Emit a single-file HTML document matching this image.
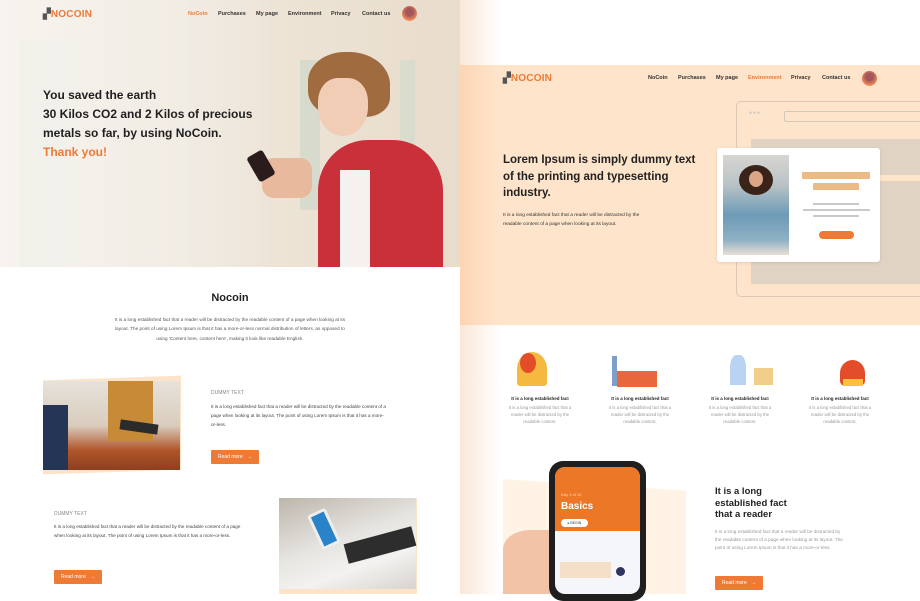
<!DOCTYPE html>
<html><head><meta charset="utf-8"><style>
*{margin:0;padding:0;box-sizing:border-box}
body{width:920px;height:594px;overflow:hidden;position:relative;background:#fff;font-family:"Liberation Sans",sans-serif;color:#222}
.abs{position:absolute}
.nav{font-size:5.5px;font-weight:bold;color:#333}
.logo{font-weight:900;font-size:10px;letter-spacing:.2px}
.btn{background:#ee7a35;color:#fff;font-size:5px;border-radius:1px;display:flex;align-items:center;justify-content:space-between;padding:0 7px}
.small{font-size:4.6px;line-height:9px;color:#444}
</style></head><body>

<!-- LEFT HERO -->
<div class="abs" style="left:0;top:0;width:460px;height:267px;background:linear-gradient(90deg,#f7f3ee 0%,#f1ece4 40%,#ede4d6 60%,#e8dccb 100%)"></div>
<div class="abs" style="left:20px;top:40px;width:50px;height:227px;background:#eef0ea;opacity:.6"></div>
<div class="abs" style="left:300px;top:60px;width:20px;height:150px;background:#c9d6c6;opacity:.6"></div>
<div class="abs" style="left:400px;top:60px;width:15px;height:120px;background:#cfdacb;opacity:.6"></div>
<!-- woman -->
<div class="abs" style="left:308px;top:52px;width:82px;height:65px;border-radius:45% 50% 30% 40%;background:#a06b3e"></div>
<div class="abs" style="left:318px;top:78px;width:50px;height:58px;border-radius:40% 40% 50% 50%;background:#f2cdb5"></div>
<div class="abs" style="left:318px;top:140px;width:125px;height:127px;border-radius:40% 40% 0 0;background:#c9303a"></div>
<div class="abs" style="left:340px;top:170px;width:30px;height:97px;background:#f4f1ee"></div>
<div class="abs" style="left:262px;top:158px;width:50px;height:40px;border-radius:12px;background:#e8b99c"></div>
<div class="abs" style="left:252px;top:152px;width:18px;height:28px;border-radius:3px;background:#2a1c1c;transform:rotate(-30deg)"></div>

<div class="abs logo" style="left:43px;top:9px;color:#ee7a35"><span style="color:#555">▞</span>NOCOIN</div>
<div class="abs nav" style="left:188px;top:11px;color:#ee7a35">NoCoin</div>
<div class="abs nav" style="left:218px;top:11px">Purchases</div>
<div class="abs nav" style="left:256px;top:11px">My page</div>
<div class="abs nav" style="left:288px;top:11px">Environment</div>
<div class="abs nav" style="left:331px;top:11px">Privacy</div>
<div class="abs nav" style="left:362px;top:11px">Contact us</div>
<div class="abs" style="left:402px;top:6px;width:15px;height:15px;border-radius:50%;background:radial-gradient(circle at 50% 40%,#a3565b 30%,#f08a5a 70%)"></div>

<div class="abs" style="left:43px;top:86px;font-size:12px;font-weight:bold;line-height:19px;color:#1f1f1f">You saved the earth<br>30 Kilos CO2 and 2 Kilos of precious<br>metals so far, by using NoCoin.<br><span style="color:#ee7a35">Thank you!</span></div>

<!-- LEFT CONTENT -->
<div class="abs" style="left:0;top:292px;width:460px;text-align:center;font-size:11px;font-weight:bold">Nocoin</div>
<div class="abs" style="left:112px;top:315px;width:236px;text-align:center;font-size:4.7px;line-height:9.3px;color:#555">It is a long established fact that a reader will be distracted by the readable content of a page when looking at its layout. The point of using Lorem Ipsum is that it has a more-or-less normal distribution of letters, as opposed to using 'Content here, content here', making it look like readable English.</div>

<div class="abs" style="left:43px;top:378px;width:138px;height:94px;background:#fde4c8;transform:skewY(-2deg)"></div>
<div class="abs" style="left:43px;top:381px;width:137px;height:89px;background:linear-gradient(180deg,#e6e2dc 0%,#d9cdbd 50%,#b0552a 78%,#8d3f1f 100%)"></div>
<div class="abs" style="left:108px;top:381px;width:45px;height:60px;background:#c78a36"></div>
<div class="abs" style="left:43px;top:405px;width:25px;height:65px;background:#253556"></div>
<div class="abs" style="left:120px;top:422px;width:38px;height:10px;background:#2b2b2b;transform:rotate(8deg)"></div>

<div class="abs" style="left:211px;top:390px;font-size:5px;color:#888">DUMMY TEXT</div>
<div class="abs small" style="left:211px;top:402px;width:175px">It is a long established fact that a reader will be distracted by the readable content of a page when looking at its layout. The point of using Lorem Ipsum is that it has a more-or-less.</div>
<div class="abs btn" style="left:211px;top:450px;width:48px;height:14px"><span>Read more</span><span>→</span></div>

<div class="abs" style="left:54px;top:511px;font-size:5px;color:#888">DUMMY TEXT</div>
<div class="abs small" style="left:54px;top:522px;width:196px">It is a long established fact that a reader will be distracted by the readable content of a page when looking at its layout. The point of using Lorem Ipsum is that it has a more-or-less.</div>
<div class="abs btn" style="left:54px;top:570px;width:48px;height:14px"><span>Read more</span><span>→</span></div>

<div class="abs" style="left:279px;top:498px;width:138px;height:96px;background:#fde4c8"></div>
<div class="abs" style="left:279px;top:498px;width:137px;height:91px;background:linear-gradient(160deg,#bcb5ab 0%,#e6e4e0 45%,#f3f2f0 70%,#d8d4ce 100%)"></div>
<div class="abs" style="left:314px;top:510px;width:20px;height:38px;border-radius:3px;background:#2a83c9;border:3px solid #eee;transform:rotate(-25deg)"></div>
<div class="abs" style="left:345px;top:535px;width:70px;height:20px;background:#2d2d2d;transform:rotate(-15deg)"></div>

<!-- RIGHT PANEL -->
<div class="abs" style="left:460px;top:0;width:460px;height:594px;background:#fff"></div>
<div class="abs" style="left:460px;top:0;width:40px;height:594px;background:linear-gradient(90deg,#fbe7d8,#fff)"></div>
<div class="abs" style="left:460px;top:65px;width:460px;height:260px;background:linear-gradient(90deg,#fdd5b5 0%,#fee4ca 8%,#fee4ca 100%)"></div>

<div class="abs logo" style="left:503px;top:73px;color:#ee7a35"><span style="color:#555">▞</span>NOCOIN</div>
<div class="abs nav" style="left:648px;top:75px">NoCoin</div>
<div class="abs nav" style="left:678px;top:75px">Purchases</div>
<div class="abs nav" style="left:716px;top:75px">My page</div>
<div class="abs nav" style="left:748px;top:75px;color:#ee7a35">Environment</div>
<div class="abs nav" style="left:791px;top:75px">Privacy</div>
<div class="abs nav" style="left:822px;top:75px">Contact us</div>
<div class="abs" style="left:862px;top:71px;width:15px;height:15px;border-radius:50%;background:radial-gradient(circle at 50% 40%,#a3565b 30%,#f08a5a 70%)"></div>

<div class="abs" style="left:503px;top:152px;font-size:11.5px;font-weight:bold;line-height:16.5px;color:#222">Lorem Ipsum is simply dummy text<br>of the printing and typesetting<br>industry.</div>
<div class="abs" style="left:503px;top:211px;font-size:4.8px;line-height:9.3px;color:#333">It is a long established fact that a reader will be distracted by the<br>readable content of a page when looking at its layout.</div>

<div class="abs" style="left:736px;top:101px;width:190px;height:196px;border:1px solid #dcc9b5;border-radius:5px"></div>
<div class="abs" style="left:749px;top:110px;color:#c5c5c5;font-size:5px;letter-spacing:1px">●●●</div>
<div class="abs" style="left:784px;top:111px;width:140px;height:11px;border:1px solid #d6c8b8;border-radius:2px"></div>
<div class="abs" style="left:751px;top:139px;width:170px;height:36px;background:#e0d3c3"></div>
<div class="abs" style="left:751px;top:181px;width:170px;height:103px;background:#e0d3c3"></div>
<div class="abs" style="left:717px;top:148px;width:163px;height:114px;background:#fff;border-radius:3px;box-shadow:0 1px 3px rgba(0,0,0,.1)"></div>
<div class="abs" style="left:723px;top:155px;width:66px;height:100px;background:linear-gradient(180deg,#d8d6d2 0%,#b9c3c6 30%,#6d9bb7 60%,#8fb0c4 85%,#e8e0d4 100%)"></div>
<div class="abs" style="left:739px;top:165px;width:34px;height:30px;border-radius:50%;background:#3a2419"></div>
<div class="abs" style="left:749px;top:171px;width:14px;height:16px;border-radius:50%;background:#d9a785"></div>
<div class="abs" style="left:802px;top:172px;width:68px;height:7px;background:#ebbb86;border-radius:1px"></div>
<div class="abs" style="left:813px;top:183px;width:46px;height:7px;background:#ebbb86;border-radius:1px"></div>
<div class="abs" style="left:813px;top:203px;width:46px;height:2px;background:#c9c9c9"></div>
<div class="abs" style="left:803px;top:209px;width:67px;height:2px;background:#c9c9c9"></div>
<div class="abs" style="left:813px;top:215px;width:46px;height:2px;background:#c9c9c9"></div>
<div class="abs" style="left:819px;top:231px;width:35px;height:8px;background:#ee7a35;border-radius:4px"></div>

<!-- features -->
<div class="abs" style="left:517px;top:352px;width:30px;height:34px;border-radius:50% 50% 10% 10%;background:#f5b93f"></div>
<div class="abs" style="left:520px;top:353px;width:16px;height:20px;border-radius:50%;background:#e44d2a"></div>
<div class="abs" style="left:617px;top:371px;width:40px;height:16px;background:#e8683b"></div>
<div class="abs" style="left:612px;top:356px;width:5px;height:30px;background:#7f9fc8"></div>
<div class="abs" style="left:730px;top:355px;width:16px;height:30px;background:#b9d3f2;border-radius:40% 40% 0 0"></div>
<div class="abs" style="left:754px;top:368px;width:19px;height:17px;background:#f1cf8b"></div>
<div class="abs" style="left:840px;top:360px;width:25px;height:26px;border-radius:50% 50% 20% 20%;background:#e44d2a"></div>
<div class="abs" style="left:843px;top:379px;width:20px;height:7px;background:#f5c53e"></div>

<div class="abs" style="left:460px;top:396px;width:460px;font-size:4.5px;font-weight:bold">
<div class="abs" style="left:40px;width:80px;text-align:center">It is a long established fact</div>
<div class="abs" style="left:140px;width:80px;text-align:center">It is a long established fact</div>
<div class="abs" style="left:240px;width:80px;text-align:center">It is a long established fact</div>
<div class="abs" style="left:340px;width:80px;text-align:center">It is a long established fact</div>
</div>
<div class="abs" style="left:460px;top:404px;width:460px;font-size:4.3px;line-height:7px;color:#999">
<div class="abs" style="left:45px;width:70px;text-align:center">It is a long established fact that a reader will be distracted by the readable content.</div>
<div class="abs" style="left:145px;width:70px;text-align:center">It is a long established fact that a reader will be distracted by the readable content.</div>
<div class="abs" style="left:245px;width:70px;text-align:center">It is a long established fact that a reader will be distracted by the readable content.</div>
<div class="abs" style="left:345px;width:70px;text-align:center">It is a long established fact that a reader will be distracted by the readable content.</div>
</div>

<!-- phone -->
<div class="abs" style="left:503px;top:479px;width:183px;height:115px;background:#fff3e6;clip-path:polygon(0 0,100% 10%,100% 100%,0 100%)"></div>
<div class="abs" style="left:503px;top:530px;width:90px;height:64px;background:#f2c3a7;border-radius:30% 20% 0 0"></div>
<div class="abs" style="left:549px;top:461px;width:97px;height:140px;background:#1f1f1f;border-radius:14px"></div>
<div class="abs" style="left:555px;top:467px;width:85px;height:127px;background:#f5f6f9;border-radius:10px;overflow:hidden">
<div style="height:64px;background:#ec7726"></div></div>
<div class="abs" style="left:561px;top:492px;color:#ffd9bf;font-size:4px">Day 1 of 10</div>
<div class="abs" style="left:561px;top:501px;color:#fff;font-size:10px;font-weight:bold">Basics</div>
<div class="abs" style="left:561px;top:519px;width:27px;height:8px;background:#fff;border-radius:4px;font-size:3.5px;color:#333;text-align:center;line-height:8px">▸ BEGIN</div>
<div class="abs" style="left:560px;top:562px;width:51px;height:16px;background:#f4dfc8"></div>
<div class="abs" style="left:616px;top:567px;width:9px;height:9px;border-radius:50%;background:#2e3560"></div>

<div class="abs" style="left:715px;top:486px;font-size:9.5px;font-weight:bold;line-height:11.5px;color:#222">It is a long<br>established fact<br>that a reader</div>
<div class="abs" style="left:715px;top:528px;width:130px;font-size:4.7px;line-height:8px;color:#999">It is a long established fact that a reader will be distracted by the readable content of a page when looking at its layout. The point of using Lorem Ipsum is that it has a more-or-less.</div>
<div class="abs btn" style="left:715px;top:576px;width:48px;height:14px"><span>Read more</span><span>→</span></div>
</body></html>
